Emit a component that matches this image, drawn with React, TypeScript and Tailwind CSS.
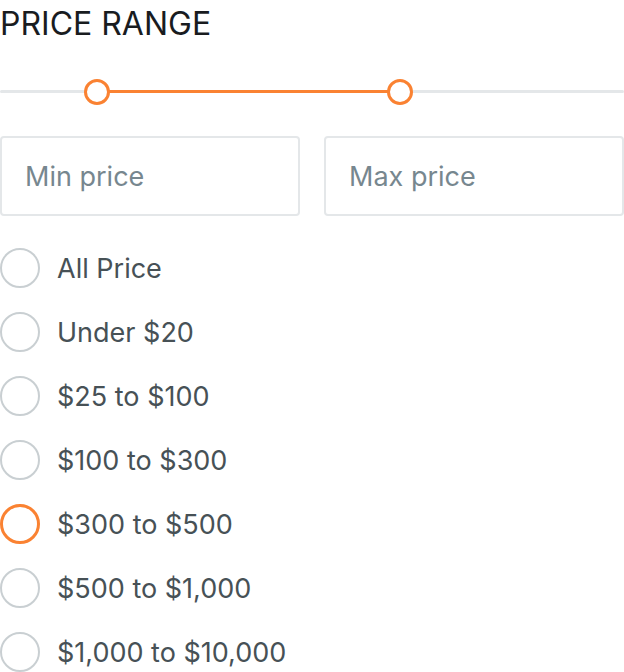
import { useState } from "react";

const options = [
  "All Price",
  "Under $20",
  "$25 to $100",
  "$100 to $300",
  "$300 to $500",
  "$500 to $1,000",
  "$1,000 to $10,000",
];

export default function App() {
  const [selected, setSelected] = useState("$300 to $500");

  return (
    <div className="w-[624px] h-[672px] overflow-hidden bg-white font-['Inter',sans-serif]">
      <h2 className="text-[32px] leading-[48px] text-[#191c1f]">PRICE RANGE</h2>

      <div className="relative mt-[30px] h-[28px]">
        <div className="absolute left-0 right-0 top-[12px] h-[3px] rounded-full bg-[#e4e7e9]" />
        <div className="absolute left-[97px] w-[303px] top-[12px] h-[3px] bg-[#fa8232]" />
        <div className="absolute left-[84px] top-[1px] w-[26px] h-[26px] rounded-full border-[3px] border-[#fa8232] bg-white" />
        <div className="absolute left-[387px] top-[1px] w-[26px] h-[26px] rounded-full border-[3px] border-[#fa8232] bg-white" />
      </div>

      <div className="mt-[30px] grid grid-cols-2 gap-6">
        <input
          placeholder="Min price"
          className="h-[80px] rounded-[4px] border-2 border-[#e4e7e9] px-[23px] text-[27px] text-[#191c1f] placeholder:text-[#77878f] outline-none"
        />
        <input
          placeholder="Max price"
          className="h-[80px] rounded-[4px] border-2 border-[#e4e7e9] px-[23px] text-[27px] text-[#191c1f] placeholder:text-[#77878f] outline-none"
        />
      </div>

      <div className="mt-[32px] flex flex-col gap-6">
        {options.map((opt) => (
          <label key={opt} className="flex items-center gap-[17px] h-[40px] cursor-pointer" onClick={() => setSelected(opt)}>
            <span
              className={
                selected === opt
                  ? "w-[40px] h-[40px] rounded-full border-[3px] border-[#fa8232]"
                  : "w-[40px] h-[40px] rounded-full border-2 border-[#c9cfd2]"
              }
            />
            <span className="pt-[2px] text-[27px] text-[#475156]">{opt}</span>
          </label>
        ))}
      </div>
    </div>
  );
}
